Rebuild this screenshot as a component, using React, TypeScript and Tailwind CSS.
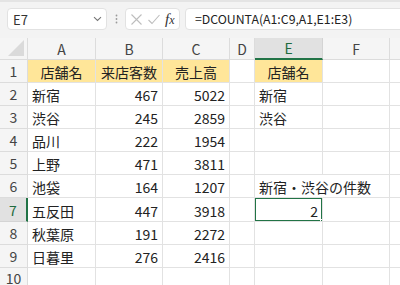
import React from "react";

const cols = [
  { key: "A", w: 68 },
  { key: "B", w: 67 },
  { key: "C", w: 67 },
  { key: "D", w: 25 },
  { key: "E", w: 68 },
  { key: "F", w: 67 },
  { key: "", w: 40 },
];

const rowHeights = [23, 23, 23, 23, 23, 23, 24, 23, 23, 20];

type Cell = { t: string; align?: "l" | "r" | "c"; yellow?: boolean; overflow?: boolean };

const data: Record<string, Cell> = {
  A1: { t: "店舗名", align: "c", yellow: true },
  B1: { t: "来店客数", align: "c", yellow: true },
  C1: { t: "売上高", align: "c", yellow: true },
  E1: { t: "店舗名", align: "c", yellow: true },
  E2: { t: "新宿" },
  E3: { t: "渋谷" },
  E6: { t: "新宿・渋谷の件数", overflow: true },
  E7: { t: "2", align: "r" },
};

const rows: [string, string, string][] = [
  ["新宿", "467", "5022"],
  ["渋谷", "245", "2859"],
  ["品川", "222", "1954"],
  ["上野", "471", "3811"],
  ["池袋", "164", "1207"],
  ["五反田", "447", "3918"],
  ["秋葉原", "191", "2272"],
  ["日暮里", "276", "2416"],
];
rows.forEach((r, i) => {
  const n = i + 2;
  data["A" + n] = { t: r[0] };
  data["B" + n] = { t: r[1], align: "r" };
  data["C" + n] = { t: r[2], align: "r" };
});

const font = { fontFamily: '"Noto Sans CJK JP", "Noto Sans", sans-serif' };

export default function App() {
  return (
    <div className="w-[400px] h-[285px] overflow-hidden bg-white text-[#222]" style={font}>
      {/* top bar */}
      <div className="h-[38px] bg-[#f3f3f3] border-t-[2px] border-[#e4e4e4] flex items-start pt-[6px] pl-[7px] overflow-hidden">
        <div className="w-[100px] h-[22px] bg-white rounded-[4px] border border-[#e2e2e2] flex items-center justify-between pl-[5px] pr-[4px] shrink-0">
          <span className="text-[13px] text-[#333] leading-none">E7</span>
          <svg width="9" height="6" viewBox="0 0 9 6">
            <path d="M1 1.2 L4.5 4.5 L8 1.2" stroke="#777" strokeWidth="1.1" fill="none" />
          </svg>
        </div>
        <div className="w-[18px] h-[22px] flex items-center justify-center shrink-0">
          <svg width="3" height="10" viewBox="0 0 3 10">
            <circle cx="1.5" cy="1.5" r="0.9" fill="#9a9a9a" />
            <circle cx="1.5" cy="5" r="0.9" fill="#9a9a9a" />
            <circle cx="1.5" cy="8.5" r="0.9" fill="#9a9a9a" />
          </svg>
        </div>
        <div className="w-[55px] h-[22px] bg-white rounded-[4px] border border-[#e2e2e2] flex items-center pl-[4px] gap-[4px] shrink-0">
          <svg width="13" height="13" viewBox="0 0 13 13">
            <path d="M1.5 1.5 L11.5 11.5 M11.5 1.5 L1.5 11.5" stroke="#bdbdbd" strokeWidth="1.1" />
          </svg>
          <svg width="14" height="13" viewBox="0 0 14 13">
            <path d="M1.5 7 L5 10.5 L12.5 2" stroke="#bdbdbd" strokeWidth="1.1" fill="none" />
          </svg>
          <span
            className="text-[15px] italic leading-none text-[#333]"
            style={{ fontFamily: '"Liberation Serif", serif' }}
          >
            f<span className="text-[12px]">x</span>
          </span>
        </div>
        <div className="w-[220px] h-[22px] ml-[5px] bg-white rounded-[4px] border border-[#e2e2e2] flex items-center pl-[9px] shrink-0">
          <span className="text-[12.3px] text-[#222] leading-none">=DCOUNTA(A1:C9,A1,E1:E3)</span>
        </div>
      </div>

      {/* column headers */}
      <div className="flex h-[22px]">
        <div className="w-[28px] shrink-0 bg-[#f5f5f5] border-r border-b border-[#dcdcdc] relative">
          <svg className="absolute left-[7px] top-[2px]" width="18" height="17" viewBox="0 0 18 17">
            <path d="M17 0 L17 16 L1 16 Z" fill="#dadada" />
          </svg>
        </div>
        {cols.map((c, i) => {
          const sel = c.key === "E";
          return (
            <div
              key={i}
              style={{ width: c.w }}
              className={
                "shrink-0 flex items-center justify-center text-[14px] leading-none border-r " +
                (sel
                  ? "bg-[#e1e1e1] text-[#1e6b3e] border-b-[2px] border-b-[#217346] border-r-[#d4d4d4]"
                  : "bg-[#f5f5f5] text-[#444] border-b border-[#dcdcdc]")
              }
            >
              {c.key}
            </div>
          );
        })}
      </div>

      {/* rows */}
      {rowHeights.map((h, ri) => {
        const rn = ri + 1;
        const selRow = rn === 7;
        return (
          <div key={rn} className="flex" style={{ height: h }}>
            <div
              className={
                "w-[28px] shrink-0 flex items-center justify-center text-[14px] leading-none border-b " +
                (selRow
                  ? "bg-[#e1e1e1] text-[#1e6b3e] border-r-[2px] border-r-[#217346] border-b-[#d4d4d4]"
                  : "bg-[#f5f5f5] text-[#444] border-r border-[#dcdcdc]")
              }
            >
              {rn}
            </div>
            {cols.map((c, ci) => {
              const id = (c.key || "G") + rn;
              const cell = data[id];
              const isSel = id === "E7";
              const align =
                cell?.align === "r" ? "justify-end pr-[4px]" : cell?.align === "c" ? "justify-center" : "justify-start pl-[4px]";
              return (
                <div
                  key={ci}
                  style={{ width: c.w }}
                  className={
                    "shrink-0 relative flex items-center text-[14px] leading-none border-b border-[#e2e2e2] whitespace-nowrap " +
                    align +
                    (cell?.overflow ? " border-r border-r-transparent overflow-visible z-10" : " border-r border-[#e2e2e2] overflow-hidden") +
                    (cell?.yellow ? " bg-[#ffe699]" : "")
                  }
                >
                  {cell && <span className="relative top-[1px]">{cell.t}</span>}
                  {isSel && (
                    <div className="absolute left-[-1px] top-[-1px] right-[-1px] bottom-[-1px] border-[2px] border-[#217346]">
                      <div className="absolute right-[-4px] bottom-[-4px] w-[5px] h-[5px] bg-[#217346] border border-white" />
                    </div>
                  )}
                </div>
              );
            })}
          </div>
        );
      })}
    </div>
  );
}
